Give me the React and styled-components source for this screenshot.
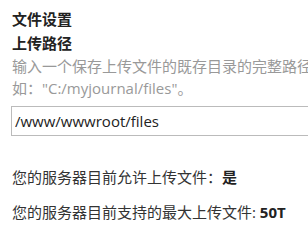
import React from "react";
import styled, { createGlobalStyle } from "styled-components";

const GlobalStyle = createGlobalStyle`
  html, body {
    margin: 0;
    padding: 0;
    background: #fff;
    overflow: hidden;
  }
  body {
    font-family: "Open Sans", "Noto Sans CJK SC", sans-serif;
    font-size: 15px;
    color: #333;
  }
`;

const Page = styled.div`
  width: 336px;
  padding: 7px 0 0 12px;
`;

const Heading = styled.div`
  font-weight: bold;
  line-height: 24px;
  color: #222;
`;

const Hint = styled.p`
  margin: 0;
  line-height: 22px;
  color: #999;
`;

const PathInput = styled.input`
  display: block;
  box-sizing: border-box;
  width: 330px;
  height: 30px;
  margin: 7px 0 0 -1px;
  padding: 0 3px;
  border: 1px solid #bbb;
  border-radius: 0;
  font: inherit;
  color: #222;
  outline: none;
`;

const Status = styled.p`
  margin: ${(props) => (props.first ? "30px" : "13px")} 0 0;
  line-height: 22px;
  color: #333;
  b {
    color: #222;
  }
`;

export default function App() {
  return (
    <>
      <GlobalStyle />
      <Page>
        <Heading>文件设置</Heading>
        <Heading>上传路径</Heading>
        <Hint>输入一个保存上传文件的既存目录的完整路径，例如："C:/myjournal/files"。</Hint>
        <PathInput defaultValue="/www/wwwroot/files" />
        <Status first>
          您的服务器目前允许上传文件：<b>是</b>
        </Status>
        <Status>
          您的服务器目前支持的最大上传文件: <b>50T</b>
        </Status>
      </Page>
    </>
  );
}
